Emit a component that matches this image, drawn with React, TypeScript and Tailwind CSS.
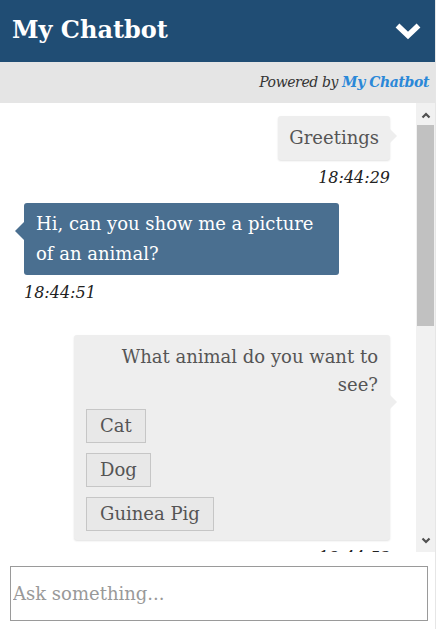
import React from 'react';

const serif = { fontFamily: '"DejaVu Serif", "Liberation Serif", serif' };

function Chevron({ up }: { up?: boolean }) {
  return (
    <svg width="10" height="7" viewBox="0 0 10 7" className="block">
      <polyline
        points={up ? '1.5,5.5 5,2 8.5,5.5' : '1.5,1.5 5,5 8.5,1.5'}
        fill="none"
        stroke="#505050"
        strokeWidth="2.2"
      />
    </svg>
  );
}

function Timestamp({ time, right }: { time: string; right?: boolean }) {
  return (
    <div className={`text-[16px] italic leading-[22px] text-[#222] mt-[7px] ${right ? 'text-right' : 'text-left'}`}>
      {time}
    </div>
  );
}

export default function App() {
  return (
    <div className="w-[440px] h-[629px] bg-white overflow-hidden" style={serif}>
      <div className="w-[436px] h-full flex flex-col border-r border-[#e6e6e6]">
        {/* header */}
        <div className="h-[62px] bg-[#204d74] flex items-center justify-between pl-[12px] pr-[12px]">
          <h1 className="text-white font-bold text-[24px] leading-none pb-[2px]">My Chatbot</h1>
          <svg width="28" height="18" viewBox="0 0 28 18" className="mr-[1px]">
            <polyline points="3.5,3.5 14,13.5 24.5,3.5" fill="none" stroke="#fff" strokeWidth="5.5" />
          </svg>
        </div>
        <div className="h-[41px] bg-[#e5e5e5] flex items-center justify-end pr-[6px] text-[14px] italic tracking-[-0.4px]">
          <span className="text-[#333]">Powered by&nbsp;</span>
          <span className="text-[#2b88d8] font-bold">My Chatbot</span>
        </div>

        {/* messages */}
        <div className="h-[449px] flex">
          <div className="flex-1 overflow-hidden pl-[24px] pr-[26px] pt-[13px]">
            <div className="flex flex-col items-end">
              <div className="relative bg-[#eeeeee] rounded-[3px] shadow-[0_1px_2px_rgba(0,0,0,0.12)] px-[11px] py-[7px] text-[18px] leading-[30px] text-[#555]">
                Greetings
                <span className="absolute right-[-7px] top-[13px] w-0 h-0 border-y-[7px] border-y-transparent border-l-[7px] border-l-[#eeeeee]" />
              </div>
              <Timestamp time="18:44:29" right />
            </div>

            <div className="flex flex-col items-start mt-[14px]">
              <div className="relative bg-[#4a6f90] rounded-[3px] w-[315px] px-[12px] py-[6px] text-[18px] leading-[30px] text-white">
                Hi, can you show me a picture of an animal?
                <span className="absolute left-[-9px] top-[19px] w-0 h-0 border-y-[9px] border-y-transparent border-r-[9px] border-r-[#4a6f90]" />
              </div>
              <Timestamp time="18:44:51" />
            </div>

            <div className="flex flex-col items-end mt-[31px]">
              <div className="relative bg-[#eeeeee] rounded-[3px] shadow-[0_1px_2px_rgba(0,0,0,0.12)] w-[316px] px-[12px] pt-[8px] pb-[9px] text-[18px] text-[#555]">
                <p className="text-right leading-[28px]">What animal do you want to see?</p>
                <div className="flex flex-col items-start gap-[10px] mt-[10px]">
                  {['Cat', 'Dog', 'Guinea Pig'].map((a) => (
                    <button
                      key={a}
                      className="bg-[#e8e8e8] border border-[#c6c6c6] px-[13px] h-[34px] leading-[32px] text-[18px] text-[#555]"
                      style={serif}
                    >
                      {a}
                    </button>
                  ))}
                </div>
                <span className="absolute right-[-7px] top-[60px] w-0 h-0 border-y-[7px] border-y-transparent border-l-[7px] border-l-[#eeeeee]" />
              </div>
              <Timestamp time="18:44:53" right />
            </div>
          </div>

          {/* scrollbar */}
          <div className="w-[19px] bg-[#f1f1f1] flex flex-col">
            <div className="h-[22px] flex items-center justify-center pt-[2px]">
              <Chevron up />
            </div>
            <div className="h-[201px] mx-[1px] bg-[#c1c1c1]" />
            <div className="flex-1" />
            <div className="h-[20px] flex items-center justify-center pb-[4px]">
              <Chevron />
            </div>
          </div>
        </div>

        {/* input */}
        <div className="flex-1 px-[10px] pt-[14px]">
          <input
            placeholder="Ask something..."
            className="w-[418px] h-[55px] border-[1.5px] border-[#9a9a9a] px-[2px] text-[18px] text-[#555] placeholder:text-[#999] outline-none"
            style={serif}
          />
        </div>
      </div>
    </div>
  );
}
